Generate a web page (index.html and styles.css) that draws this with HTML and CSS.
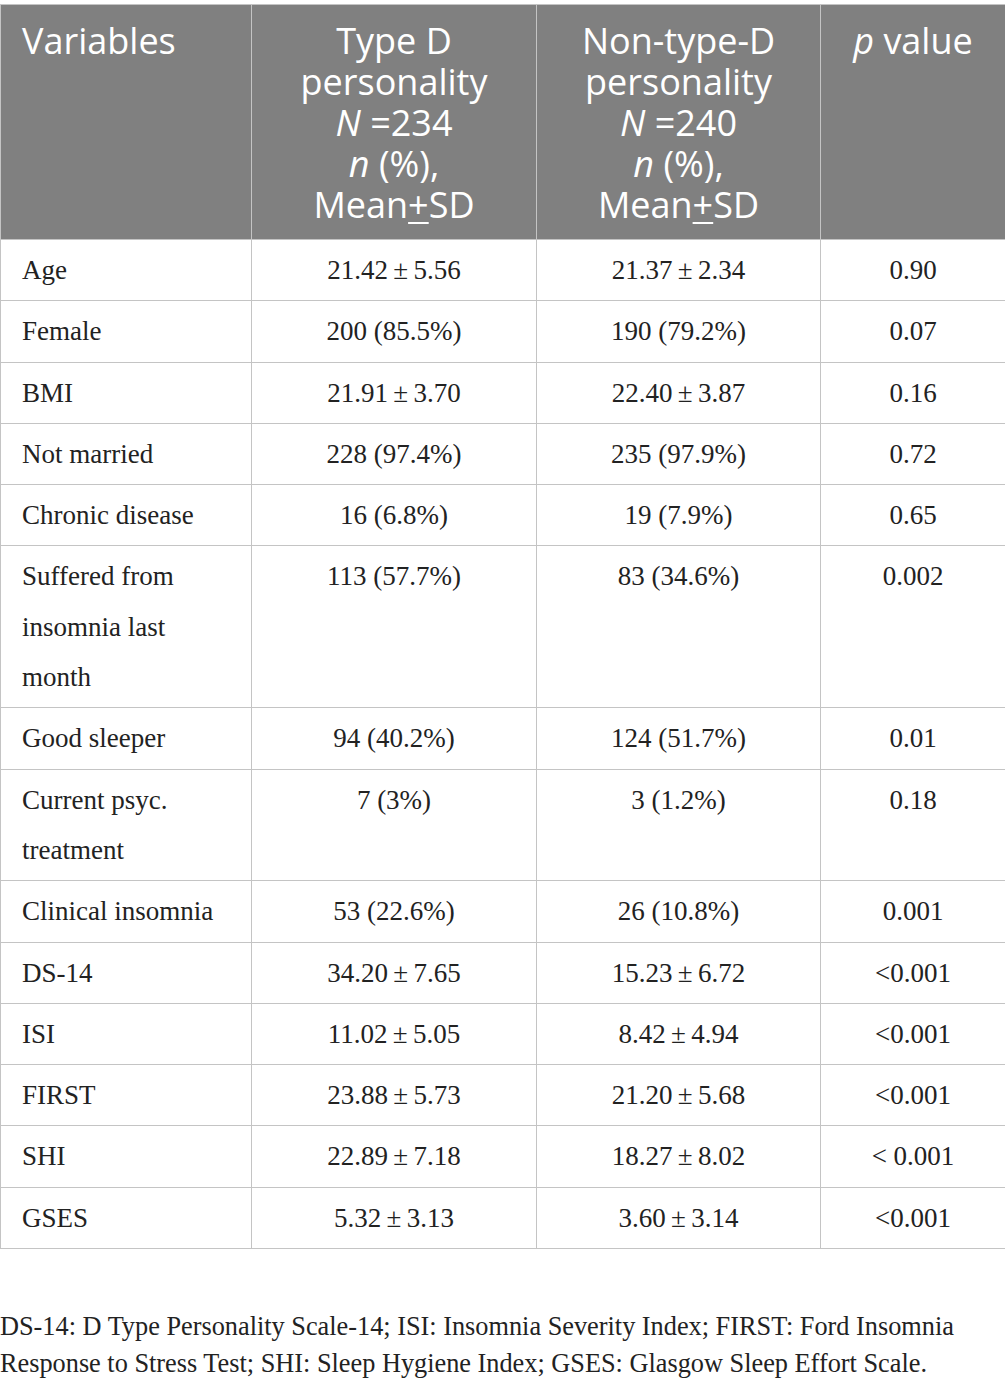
FILE: index.html
```html
<!DOCTYPE html>
<html>
<head>
<meta charset="utf-8">
<link rel="stylesheet" href="styles.css">
</head>
<body>
<div class="page">
<table class="tbl">
  <colgroup>
    <col class="c1"><col class="c2"><col class="c3"><col class="c4">
  </colgroup>
  <thead>
    <tr>
      <th class="left">Variables</th>
      <th>Type D<br>personality<br><i>N</i> =234<br><i>n</i> (%),<br>Mean<u>+</u>SD</th>
      <th>Non-type-D<br>personality<br><i>N</i> =240<br><i>n</i> (%),<br>Mean<u>+</u>SD</th>
      <th><i>p</i> value</th>
    </tr>
  </thead>
  <tbody>
    <tr><td class="left">Age</td><td>21.42&thinsp;±&thinsp;5.56</td><td>21.37&thinsp;±&thinsp;2.34</td><td>0.90</td></tr>
    <tr><td class="left">Female</td><td>200 (85.5%)</td><td>190 (79.2%)</td><td>0.07</td></tr>
    <tr><td class="left">BMI</td><td>21.91&thinsp;±&thinsp;3.70</td><td>22.40&thinsp;±&thinsp;3.87</td><td>0.16</td></tr>
    <tr><td class="left">Not married</td><td>228 (97.4%)</td><td>235 (97.9%)</td><td>0.72</td></tr>
    <tr><td class="left">Chronic disease</td><td>16 (6.8%)</td><td>19 (7.9%)</td><td>0.65</td></tr>
    <tr><td class="left">Suffered from<br>insomnia last<br>month</td><td>113 (57.7%)</td><td>83 (34.6%)</td><td>0.002</td></tr>
    <tr><td class="left">Good sleeper</td><td>94 (40.2%)</td><td>124 (51.7%)</td><td>0.01</td></tr>
    <tr><td class="left">Current psyc.<br>treatment</td><td>7 (3%)</td><td>3 (1.2%)</td><td>0.18</td></tr>
    <tr><td class="left">Clinical insomnia</td><td>53 (22.6%)</td><td>26 (10.8%)</td><td>0.001</td></tr>
    <tr><td class="left">DS-14</td><td>34.20&thinsp;±&thinsp;7.65</td><td>15.23&thinsp;±&thinsp;6.72</td><td>&lt;0.001</td></tr>
    <tr><td class="left">ISI</td><td>11.02&thinsp;±&thinsp;5.05</td><td>8.42&thinsp;±&thinsp;4.94</td><td>&lt;0.001</td></tr>
    <tr><td class="left">FIRST</td><td>23.88&thinsp;±&thinsp;5.73</td><td>21.20&thinsp;±&thinsp;5.68</td><td>&lt;0.001</td></tr>
    <tr><td class="left">SHI</td><td>22.89&thinsp;±&thinsp;7.18</td><td>18.27&thinsp;±&thinsp;8.02</td><td>&lt; 0.001</td></tr>
    <tr><td class="left">GSES</td><td>5.32&thinsp;±&thinsp;3.13</td><td>3.60&thinsp;±&thinsp;3.14</td><td>&lt;0.001</td></tr>
  </tbody>
</table>
<p class="note">DS-14: D Type Personality Scale-14; ISI: Insomnia Severity Index; FIRST: Ford Insomnia Response to Stress Test; SHI: Sleep Hygiene Index; GSES: Glasgow Sleep Effort Scale.</p>
</div>
</body>
</html>
```

FILE: styles.css
```css
html, body {
  margin: 0;
  padding: 0;
  background: #ffffff;
}
.page {
  width: 1005px;
  padding-top: 4px;
}
.tbl {
  width: 1005px;
  border-collapse: collapse;
  table-layout: fixed;
}
.c1 { width: 251px; }
.c2 { width: 285px; }
.c3 { width: 284px; }
.c4 { width: 185px; }
.tbl th {
  background: #808080;
  color: #ffffff;
  font-family: "Open Sans", "Noto Sans", sans-serif;
  font-weight: 400;
  font-size: 36px;
  line-height: 41px;
  text-align: center;
  vertical-align: top;
  padding: 15px 6px 14px;
  border: 1.5px solid #c4c4c4;
}
.tbl th u {
  text-decoration-thickness: 2px;
  text-underline-offset: 4px;
}
.tbl td {
  font-family: "Liberation Serif", "Times New Roman", serif;
  font-size: 27px;
  line-height: 50.3px;
  color: #222222;
  text-align: center;
  vertical-align: top;
  padding: 5px 8px;
  border: 1px solid #c4c4c4;
}
.tbl th.left, .tbl td.left {
  text-align: left;
  padding-left: 21px;
}
.note {
  margin: 59px 0 0;
  font-family: "Liberation Serif", "Times New Roman", serif;
  font-size: 26.3px;
  line-height: 37px;
  color: #222222;
}
```
